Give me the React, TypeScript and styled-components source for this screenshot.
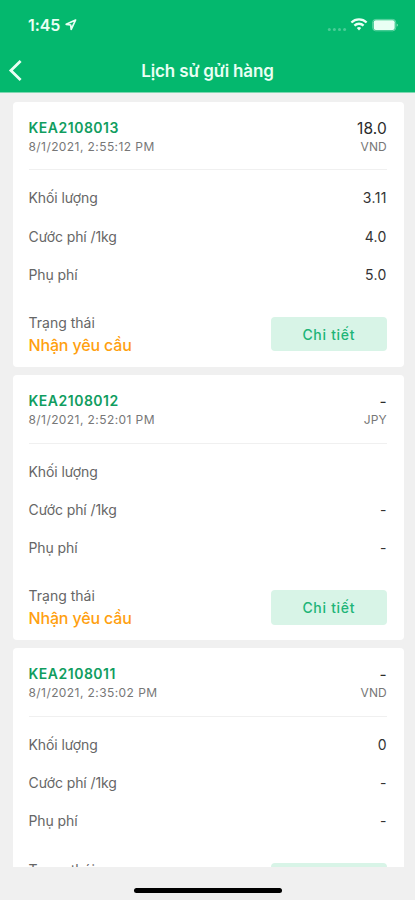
import React from "react";
import styled, { createGlobalStyle } from "styled-components";

const GlobalStyle = createGlobalStyle`
  * { box-sizing: border-box; }
  body { margin: 0; background: #f0f0f0; font-family: Inter, "Noto Sans", sans-serif; }
`;

const Screen = styled.div`
  display: flex;
  flex-direction: column;
  width: 415px;
  height: 900px;
  overflow: hidden;
  background: #f0f0f0;
`;

const Header = styled.header`
  flex: none;
  height: 93px;
  background: #04b86e;
  border-bottom: 1px solid #7ed7b1;
  color: #e9fff4;
`;

const StatusBar = styled.div`
  display: flex;
  align-items: center;
  height: 50px;
  padding: 0 16px 0 28px;
`;

const Clock = styled.span`
  font-size: 16px;
  font-weight: 600;
  letter-spacing: -0.1px;
  width: 36px;
  white-space: nowrap;
`;

const Indicators = styled.div`
  display: flex;
  align-items: center;
  margin-left: auto;
`;

const NavBar = styled.div`
  display: grid;
  grid-template-columns: 40px 1fr 40px;
  align-items: center;
  height: 42px;
`;

const BackButton = styled.button`
  display: flex;
  padding: 0 0 0 8px;
  border: 0;
  background: none;
  color: inherit;
`;

const Title = styled.h1`
  margin: 0;
  text-align: center;
  font-size: 17px;
  font-weight: 600;
  letter-spacing: -0.15px;
  line-height: 42px;
`;

const List = styled.main`
  flex: none;
  display: flex;
  flex-direction: column;
  gap: 8px;
  height: 773.5px;
  padding: 8.5px 11.5px 0 12.5px;
  overflow: hidden;
`;

const Card = styled.article`
  flex: none;
  display: flex;
  flex-direction: column;
  height: 265.3px;
  padding: 16px 16.7px 0 16px;
  border-radius: 4px;
  background: #fff;
`;

const CardHead = styled.div`
  display: flex;
  justify-content: space-between;
  padding-bottom: 13.8px;
  border-bottom: 1px solid #f0f0f0;
`;

const HeadColumn = styled.div<{ $end?: boolean }>`
  display: flex;
  flex-direction: column;
  align-items: ${(p) => (p.$end ? "flex-end" : "flex-start")};
  line-height: 19px;
`;

const Code = styled.span`
  color: #109d60;
  font-size: 14px;
  font-weight: 600;
  letter-spacing: 0.5px;
`;

const Meta = styled.span<{ $tight?: boolean }>`
  color: #777;
  font-size: 12px;
  letter-spacing: ${(p) => (p.$tight ? "0.1px" : "0.42px")};
`;

const Total = styled.span`
  height: 19px;
  color: #2c2c2c;
  font-size: 15.5px;
  line-height: 21px;
  letter-spacing: 0.1px;
`;

const Rows = styled.dl`
  margin: 0;
  padding-top: 9px;
`;

const Row = styled.div`
  display: flex;
  justify-content: space-between;
  line-height: 38.2px;
  font-size: 14px;
`;

const Label = styled.dt`
  color: #666;
  letter-spacing: -0.1px;
`;

const Value = styled.dd`
  margin: 0;
  color: #333;
  letter-spacing: 0.35px;
`;

const CardFoot = styled.div`
  display: flex;
  align-items: center;
  justify-content: space-between;
  padding-top: 17.2px;
`;

const StateLabel = styled.div`
  color: #666;
  font-size: 14px;
  line-height: 23px;
`;

const StateValue = styled.div`
  color: #ffa00f;
  font-size: 16px;
  font-weight: 500;
  letter-spacing: -0.15px;
  line-height: 23px;
`;

const DetailButton = styled.button`
  width: 116px;
  height: 34.5px;
  padding: 0;
  border: 0;
  border-radius: 4px;
  background: #d8f4e7;
  color: #20b477;
  font: 500 14px Inter, "Noto Sans", sans-serif;
  letter-spacing: 0.7px;
`;

const HomeArea = styled.footer`
  flex: 1;
  display: flex;
  justify-content: center;
  padding-top: 21px;
`;

const HomeBar = styled.div`
  width: 148px;
  height: 5px;
  border-radius: 3px;
  background: #000;
`;

const LocationIcon = () => (
  <svg width="14" height="14" viewBox="0 0 14 14" fill="none" stroke="currentColor" strokeWidth="1.7" strokeLinejoin="round">
    <path d="M11.6 2 2.2 6.3 6.7 7 7.2 11.4Z" />
  </svg>
);

const StatusIcons = () => (
  <svg width="72" height="16" viewBox="0 0 72 16" fill="currentColor">
    <g opacity="0.3">
      <circle cx="2.3" cy="12.4" r="1.5" />
      <circle cx="7.4" cy="12.4" r="1.5" />
      <circle cx="12.5" cy="12.4" r="1.5" />
      <circle cx="17.6" cy="12.4" r="1.5" />
    </g>
    <g fill="none" stroke="currentColor" strokeWidth="2.3">
      <path d="M24.4 5.5A10.8 10.8 0 0 1 39.6 5.5" />
      <path d="M27.4 8.6A6.6 6.6 0 0 1 36.6 8.6" />
    </g>
    <path d="M29.8 11.1a3.3 3.3 0 0 1 4.4 0L32 13.6Z" />
    <rect x="45.7" y="2.4" width="23" height="11.4" rx="3" fill="none" stroke="currentColor" opacity="0.4" />
    <rect x="46.7" y="3.3" width="21" height="9.6" rx="2" />
    <path d="M69.7 6.6c1.8.5 1.8 2.7 0 3.2Z" opacity="0.5" />
  </svg>
);

const BackIcon = () => (
  <svg width="16" height="24" viewBox="0 0 16 24" fill="none" stroke="currentColor" strokeWidth="2.8">
    <path d="M12.6 2 2.9 11.5l9.7 9.5" />
  </svg>
);

type Shipment = {
  code: string;
  date: string;
  total: string;
  currency: string;
  weight: string;
  rate: string;
  surcharge: string;
};

const shipments: Shipment[] = [
  { code: "KEA2108013", date: "8/1/2021, 2:55:12 PM", total: "18.0", currency: "VND", weight: "3.11", rate: "4.0", surcharge: "5.0" },
  { code: "KEA2108012", date: "8/1/2021, 2:52:01 PM", total: "-", currency: "JPY", weight: "", rate: "-", surcharge: "-" },
  { code: "KEA2108011", date: "8/1/2021, 2:35:02 PM", total: "-", currency: "VND", weight: "0", rate: "-", surcharge: "-" },
];

const ShipmentCard = ({ item }: { item: Shipment }) => (
  <Card>
    <CardHead>
      <HeadColumn>
        <Code>{item.code}</Code>
        <Meta>{item.date}</Meta>
      </HeadColumn>
      <HeadColumn $end>
        <Total>{item.total}</Total>
        <Meta $tight>{item.currency}</Meta>
      </HeadColumn>
    </CardHead>
    <Rows>
      <Row><Label>Khối lượng</Label><Value>{item.weight}</Value></Row>
      <Row><Label>Cước phí /1kg</Label><Value>{item.rate}</Value></Row>
      <Row><Label>Phụ phí</Label><Value>{item.surcharge}</Value></Row>
    </Rows>
    <CardFoot>
      <div>
        <StateLabel>Trạng thái</StateLabel>
        <StateValue>Nhận yêu cầu</StateValue>
      </div>
      <DetailButton>Chi tiết</DetailButton>
    </CardFoot>
  </Card>
);

export default function App() {
  return (
    <>
      <GlobalStyle />
      <Screen>
        <Header>
          <StatusBar>
            <Clock>1:45</Clock>
            <LocationIcon />
            <Indicators><StatusIcons /></Indicators>
          </StatusBar>
          <NavBar>
            <BackButton aria-label="Quay lại"><BackIcon /></BackButton>
            <Title>Lịch sử gửi hàng</Title>
          </NavBar>
        </Header>
        <List>
          {shipments.map((item) => <ShipmentCard key={item.code} item={item} />)}
        </List>
        <HomeArea><HomeBar /></HomeArea>
      </Screen>
    </>
  );
}
